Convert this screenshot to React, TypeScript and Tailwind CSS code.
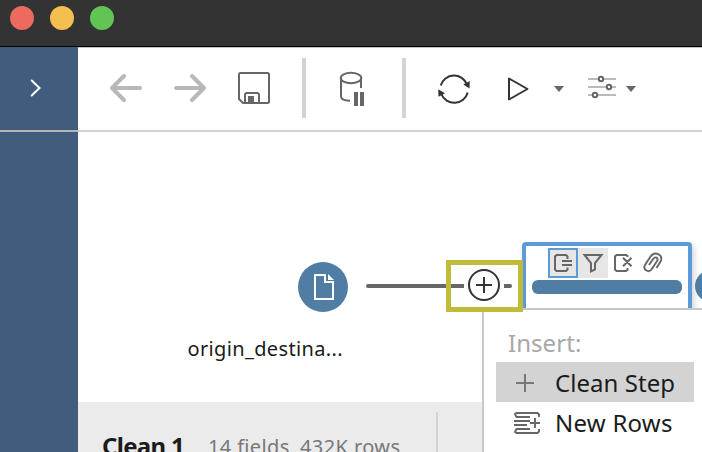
import React from "react";

function Stroke({ children, w, h, className = "" }: { children: React.ReactNode; w: number; h: number; className?: string }) {
  return (
    <svg width={w} height={h} viewBox={`0 0 ${w} ${h}`} fill="none" stroke="currentColor" strokeWidth="2" className={`block shrink-0 ${className}`}>
      {children}
    </svg>
  );
}

function Caret({ className = "" }: { className?: string }) {
  return (
    <svg width="12" height="8" viewBox="0 0 12 8" className={`block shrink-0 fill-[#666] ${className}`}>
      <path d="M1 1H11L6 7Z" />
    </svg>
  );
}

function Toolbar() {
  return (
    <div className="flex h-[85px] shrink-0 items-start border-t border-b-2 border-t-[#c4c4c4] border-b-[#d3d3d3] pt-[10px] pl-[28px]">
      <Stroke w={40} h={60} className="text-[#b8b8b8]">
        <path d="M34 30H6M18 18L6 30L18 42" strokeWidth="4" strokeLinecap="round" strokeLinejoin="round" />
      </Stroke>
      <Stroke w={40} h={60} className="ml-[24px] text-[#b8b8b8]">
        <path d="M6 30H34M22 18L34 30L22 42" strokeWidth="4" strokeLinecap="round" strokeLinejoin="round" />
      </Stroke>
      <Stroke w={40} h={60} className="ml-[24px] text-[#666]">
        <path d="M6.500 15H33.500Q35 15 35 16.500V43.500Q35 45 33.500 45H9L5 41V16.500Q5 15 6.500 15ZM11 45V37Q11 35 13 35H23Q25 35 25 37V45" />
        <path d="M14 38H20V45H14Z" fill="currentColor" stroke="none" />
      </Stroke>
      <div className="ml-[28px] h-[60px] w-[4px] bg-[#d3d3d3]" />
      <Stroke w={40} h={60} className="ml-[24px] text-[#666]">
        <ellipse cx="21" cy="20" rx="10.300" ry="5.200" />
        <path d="M11 20V38.500C11 41.500 15 42.500 20 42.800M31 20V30" />
        <path d="M24 34H28V48H24ZM30 34H34V48H30Z" fill="currentColor" stroke="none" />
      </Stroke>
      <div className="ml-[32px] h-[60px] w-[4px] bg-[#d3d3d3]" />
      <Stroke w={40} h={60} className="ml-[28px] text-[#333]">
        <path d="M6.700 27.500A13.900 13.900 0 0 1 33 26.500M33.700 34.500A13.900 13.900 0 0 1 7.300 36" />
        <path d="M29.300 26.500L35.800 23L35.500 30.500ZM4.200 31.200L11 35.300L4.500 38.800Z" fill="currentColor" stroke="none" />
      </Stroke>
      <Stroke w={40} h={60} className="ml-[24px] text-[#333]">
        <path d="M11 20.500V41.500L29.500 31Z" strokeLinejoin="round" />
      </Stroke>
      <Caret className="mt-[27px] ml-[15px]" />
      <Stroke w={30} h={60} className="ml-[22px]">
        <path d="M1 21H29M1 29H29M1 37H29" stroke="#bbb" />
        <g fill="#fff" stroke="#666"><circle cx="14" cy="21" r="2.200" /><circle cx="22" cy="29" r="2.200" /><circle cx="8" cy="37" r="2.200" /></g>
      </Stroke>
      <Caret className="mt-[27px] ml-[8px]" />
    </div>
  );
}

function StepCard() {
  return (
    <div className="absolute top-[110px] left-[444px] h-[90px] w-[170px] rounded-[4px] border-4 border-[#5b9bd9] bg-white pt-[2px] shadow-[2px_3px_6px_rgba(0,0,0,0.18)]">
      <div className="flex pl-[22px] text-[#666]">
        <div className="h-[30px] w-[30px] border-2 border-[#5b9bd9] bg-[#e6e6e6]">
          <Stroke w={26} h={26}>
            <path d="M17.500 9V6.500L16 5H6.500L5 6.500V19.500L6.500 21H16L17.500 19.500V17.500M12 11H22M12 15H22" />
          </Stroke>
        </div>
        <div className="h-[30px] w-[30px] bg-[#e6e6e6]">
          <Stroke w={30} h={30}>
            <path d="M6.500 7H23.500L17 15V21.500L13 23.500V15Z" />
          </Stroke>
        </div>
        <Stroke w={30} h={30}>
          <path d="M19.500 9V8L18 7H8.500L7 8.500V21.500L8.500 23H18L19.500 22V20M15 9.700L23.500 18.300M23.500 9.700L15 18.300" />
        </Stroke>
        <Stroke w={30} h={30}>
          <path d="M11 17L15.300 10.800C17.500 8 20.800 10 19.200 12.800L14 20.800C11 25.500 4.500 22 7 17L12.500 8.500C16.500 2.500 25.500 6.500 22.800 13L18.500 20" strokeWidth="1.900" />
        </Stroke>
      </div>
      <div className="mx-[6px] mt-[2px] h-[14px] rounded-[6px] bg-[#4f7da3]" />
    </div>
  );
}

function InsertMenu() {
  return (
    <div className="absolute top-[308px] left-[482px] h-[160px] w-[240px] border-2 border-[#c8c8c8] bg-white pt-[18px] pl-[12px] text-[24px] text-[#1b1b1b]">
      <div className="h-[34px] pl-[12px] leading-[30px] tracking-[0.05px] text-[#a8a8a8]">Insert:</div>
      <div className="flex h-[40px] w-[198px] items-center bg-[#d3d3d3]">
        <Stroke w={30} h={30} className="ml-[14px] text-[#777]"><path d="M6 16H24M15 7V25" /></Stroke>
        <span className="ml-[15px] pt-[2px] tracking-[0.05px] whitespace-nowrap">Clean Step</span>
      </div>
      <div className="flex h-[40px] w-[198px] items-center">
        <Stroke w={30} h={30} className="ml-[16px] text-[#666]">
          <path d="M27 10V7.500L25.500 6H4.500L3 7L4.500 10H18M2 14H18M2 18H15M18 22H4.500L3 25L4.500 26H25.500L27 24.500V22M18 16H28M23 11V21" strokeWidth="1.900" />
        </Stroke>
        <span className="ml-[13px] pt-[2px] tracking-[0.25px] whitespace-nowrap">New Rows</span>
      </div>
    </div>
  );
}

export default function App() {
  return (
    <div className="relative flex h-[452px] w-[702px] flex-col overflow-hidden bg-white font-['Noto_Sans',sans-serif]">
      <header className="flex h-[47px] shrink-0 gap-[16px] border-b border-black bg-[#333] pt-[6px] pl-[10px]">
        <div className="h-[24px] w-[24px] rounded-full bg-[#ed6a5e]" />
        <div className="h-[24px] w-[24px] rounded-full bg-[#f5bf4f]" />
        <div className="h-[24px] w-[24px] rounded-full bg-[#61c554]" />
      </header>
      <div className="flex min-h-0 grow">
        <aside className="w-[78px] shrink-0 bg-[#415c7c]">
          <div className="flex h-[85px] border-b-2 border-[#b4b4b4] pt-[31px] pl-[29px] text-white">
            <Stroke w={14} h={20}><path d="M2.700 2.500L10.500 10L2.700 17.500" strokeLinecap="round" /></Stroke>
          </div>
        </aside>
        <main className="flex min-w-0 grow flex-col">
          <Toolbar />
          <div className="relative h-[270px] shrink-0">
            <div className="absolute top-[130px] left-[220px] h-[50px] w-[50px] rounded-full bg-[#4f7da3] text-white">
              <Stroke w={50} h={50}>
                <path d="M17 13H27V20H35V37H17Z" />
                <path d="M30 12V18H36Z" fill="currentColor" stroke="none" />
              </Stroke>
            </div>
            <div className="absolute top-[152px] left-[288px] h-[4px] w-[98px] rounded-l-full bg-[#666]" />
            <div className="absolute top-[152px] left-[426px] h-[4px] w-[8px] rounded-r-full bg-[#666]" />
            <Stroke w={34} h={34} className="absolute top-[136px] left-[389px] text-[#333]">
              <circle cx="17" cy="17" r="15" /><path d="M9 17H25M17 9V25" />
            </Stroke>
            <div className="absolute top-[203px] left-[109.500px] text-[20px] leading-[28px] tracking-[0.35px] whitespace-nowrap text-[#1b1b1b]">origin_destina...</div>
            <StepCard />
            <div className="absolute top-[138px] left-[617px] h-[32px] w-[32px] rounded-full bg-[#4f7da3]" />
          </div>
          <div className="flex grow bg-[#ebebeb] pl-[24px] whitespace-nowrap">
            <div className="w-[106px] pt-[27px] text-[24px] leading-[34px] font-bold tracking-[-0.7px] text-[#1b1b1b]">Clean 1</div>
            <div className="w-[92px] pt-[29px] text-[20px] leading-[32px] tracking-[0.35px] text-[#777]">14 fields</div>
            <div className="w-[136px] pt-[29px] text-[20px] leading-[32px] tracking-[0.4px] text-[#777]">432K rows</div>
            <div className="mt-[10px] w-[2px] bg-[#d3d3d3]" />
          </div>
        </main>
      </div>
      <InsertMenu />
      <div className="absolute top-[260px] left-[446px] h-[52px] w-[77px] border-5 border-[#c1bb3a]" />
    </div>
  );
}
